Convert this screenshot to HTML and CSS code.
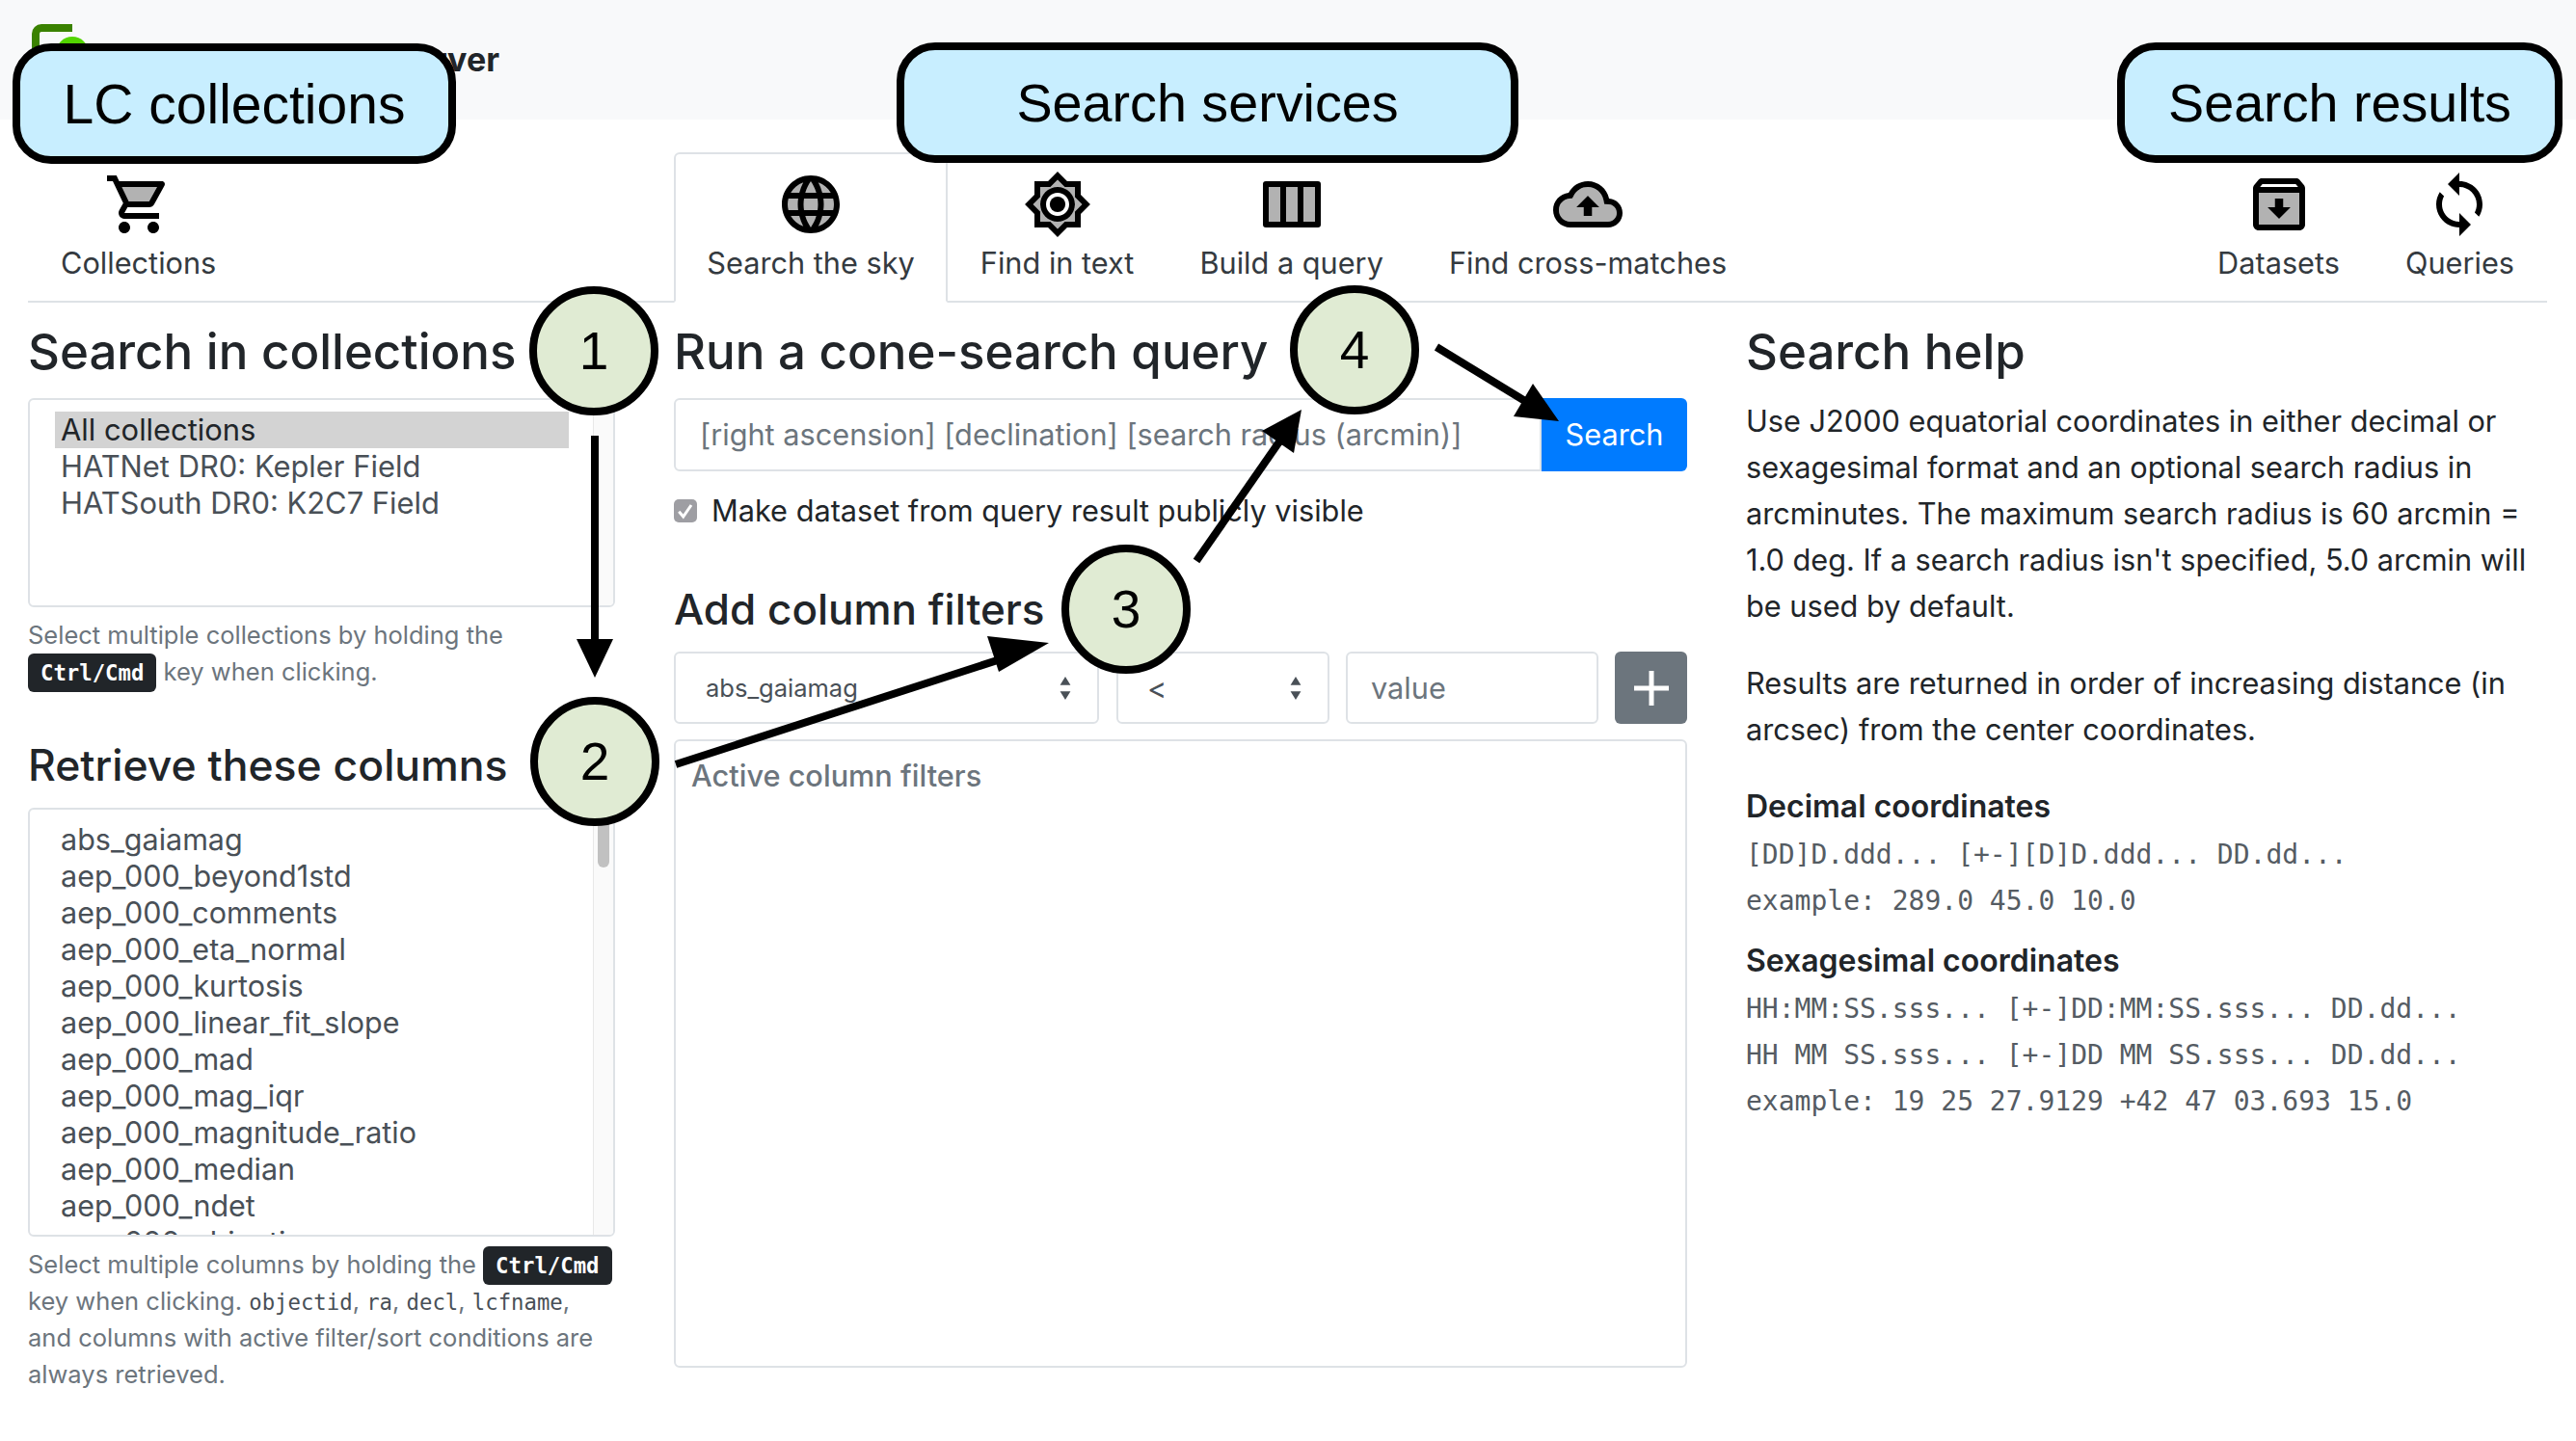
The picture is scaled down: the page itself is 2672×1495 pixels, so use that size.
FILE: index.html
```html
<!DOCTYPE html>
<html lang="en">
<head>
<meta charset="UTF-8" />
<meta name="viewport" content="width=device-width, initial-scale=1.0" />
<title>LCC-Server</title>
<link rel="stylesheet" href="styles.css">
</head>
<body>

<div class="page">

  <nav class="navbar">
    <svg class="logo" viewBox="0 0 60 60">
      <path d="M42 4H10a6 6 0 0 0-6 6v40" fill="none" stroke="#3a8200" stroke-width="8"/>
      <circle cx="42" cy="30" r="17" fill="#52d400"/>
    </svg>
    <span class="brand">HAT data server</span>
  </nav>

  <ul class="tabs">
    <li class="tab tab-first">
      <svg class="icon" viewBox="0 0 24 24"><path opacity=".3" d="M15.55 11l2.76-5H6.16l2.37 5z"/><path d="M15.55 13c.75 0 1.41-.41 1.75-1.03l3.58-6.49c.37-.66-.11-1.48-.87-1.48H5.21l-.94-2H1v2h2l3.6 7.59-1.35 2.44C4.52 15.37 5.48 17 7 17h12v-2H7l1.1-2h7.45zM6.16 6h12.15l-2.76 5H8.53L6.16 6zM7 18c-1.1 0-1.99.9-1.99 2S5.9 22 7 22s2-.9 2-2-.9-2-2-2zm10 0c-1.1 0-1.99.9-1.99 2s.89 2 1.99 2 2-.9 2-2-.9-2-2-2z"/></svg>
      <span>Collections</span>
    </li>
    <li class="tab active">
      <svg class="icon" viewBox="0 0 24 24"><circle opacity=".3" cx="12" cy="12" r="9.5"/><path d="M11.99 2C6.47 2 2 6.48 2 12s4.47 10 9.99 10C17.52 22 22 17.52 22 12S17.52 2 11.99 2zm6.93 6h-2.95c-.32-1.25-.78-2.45-1.38-3.56 1.84.63 3.37 1.91 4.33 3.56zM12 4.04c.83 1.2 1.48 2.53 1.91 3.96h-3.82c.43-1.43 1.08-2.76 1.91-3.96zM4.26 14C4.1 13.36 4 12.69 4 12s.1-1.36.26-2h3.38c-.08.66-.14 1.32-.14 2 0 .68.06 1.34.14 2H4.26zm.82 2h2.95c.32 1.25.78 2.45 1.38 3.56-1.84-.63-3.37-1.9-4.33-3.56zm2.95-8H5.08c.96-1.66 2.49-2.93 4.33-3.56C8.81 5.55 8.35 6.75 8.03 8zM12 19.96c-.83-1.2-1.48-2.53-1.91-3.96h3.82c-.43 1.43-1.08 2.76-1.91 3.96zM14.34 14H9.66c-.09-.66-.16-1.32-.16-2 0-.68.07-1.35.16-2h4.68c.09.65.16 1.32.16 2 0 .68-.07 1.34-.16 2zm.25 5.56c.6-1.11 1.06-2.31 1.38-3.56h2.95c-.96 1.65-2.49 2.93-4.33 3.56zM16.36 14c.08-.66.14-1.32.14-2 0-.68-.06-1.34-.14-2h3.38c.16.64.26 1.31.26 2s-.1 1.36-.26 2h-3.38z"/></svg>
      <span>Search the sky</span>
    </li>
    <li class="tab">
      <svg class="icon" viewBox="0 0 24 24"><path opacity=".3" d="M18 9.52V6h-3.52L12 3.52 9.52 6H6v3.52L3.52 12 6 14.48V18h3.52L12 20.48 14.48 18H18v-3.52L20.48 12 18 9.52zM12 18c-3.31 0-6-2.69-6-6s2.69-6 6-6 6 2.69 6 6-2.69 6-6 6z"/><path d="M20 8.69V4h-4.69L12 .69 8.69 4H4v4.69L.69 12 4 15.31V20h4.69L12 23.31 15.31 20H20v-4.69L23.31 12 20 8.69zm-2 5.79V18h-3.52L12 20.48 9.52 18H6v-3.52L3.52 12 6 9.52V6h3.52L12 3.52 14.48 6H18v3.52L20.48 12 18 14.48zM12 6c-3.31 0-6 2.69-6 6s2.69 6 6 6 6-2.69 6-6-2.69-6-6-6zm0 10c-2.21 0-4-1.79-4-4s1.79-4 4-4 4 1.79 4 4-1.79 4-4 4z"/><circle cx="12" cy="12" r="2.7"/></svg>
      <span>Find in text</span>
    </li>
    <li class="tab">
      <svg class="icon" viewBox="0 0 24 24"><path opacity=".3" d="M4 6h4v12H4zM10 6h4v12h-4zM16 6h4v12h-4z"/><path d="M3 4h18a1 1 0 0 1 1 1v14a1 1 0 0 1-1 1H3a1 1 0 0 1-1-1V5a1 1 0 0 1 1-1zm1 2v12h4V6H4zm6 0v12h4V6h-4zm6 0v12h4V6h-4z"/></svg>
      <span>Build a query</span>
    </li>
    <li class="tab">
      <svg class="icon" viewBox="0 0 24 24"><path opacity=".3" d="M19.21 12.04l-1.53-.11-.3-1.5C16.88 7.86 14.62 6 12 6 9.94 6 8.08 7.14 7.12 8.96l-.5.95-1.07.11C3.53 10.24 2 11.95 2 14c0 2.21 1.79 4 4 4h13c1.65 0 3-1.35 3-3 0-1.55-1.22-2.86-2.79-2.96zm-5.76.96v3h-2.91v-3H8l4-4 4 4h-2.55z"/><path d="M19.35 10.04C18.67 6.59 15.64 4 12 4 9.11 4 6.6 5.64 5.35 8.04 2.34 8.36 0 10.91 0 14c0 3.31 2.69 6 6 6h13c2.76 0 5-2.24 5-5 0-2.64-2.05-4.78-4.65-4.96zM19 18H6c-2.21 0-4-1.79-4-4 0-2.05 1.53-3.76 3.56-3.97l1.07-.11.5-.95C8.08 7.14 9.94 6 12 6c2.62 0 4.88 1.86 5.39 4.43l.3 1.5 1.53.11c1.56.1 2.78 1.41 2.78 2.96 0 1.65-1.35 3-3 3zM8 13h2.55v3h2.91v-3H16l-4-4z"/></svg>
      <span>Find cross-matches</span>
    </li>
    <li class="tab tab-results">
      <svg class="icon" viewBox="0 0 24 24"><path opacity=".3" d="M5 19h14V8H5v11zm5.55-6v-3h2.9v3H16l-4 4-4-4h2.55z"/><path d="M20.54 5.23l-1.39-1.68C18.88 3.21 18.47 3 18 3H6c-.47 0-.88.21-1.16.55L3.46 5.23C3.17 5.57 3 6.02 3 6.5V19c0 1.1.9 2 2 2h14c1.1 0 2-.9 2-2V6.5c0-.48-.17-.93-.46-1.27zM6.24 5h11.52l.83 1H5.42l.82-1zM5 19V8h14v11H5zm8.45-9h-2.9v3H8l4 4 4-4h-2.55z"/></svg>
      <span>Datasets</span>
    </li>
    <li class="tab">
      <svg class="icon" viewBox="0 0 24 24"><path d="M12 4V1L8 5l4 4V6c3.31 0 6 2.69 6 6 0 1.01-.25 1.97-.7 2.8l1.46 1.46C19.54 15.03 20 13.57 20 12c0-4.42-3.58-8-8-8zm0 14c-3.31 0-6-2.69-6-6 0-1.01.25-1.97.7-2.8L5.24 7.74C4.46 8.97 4 10.43 4 12c0 4.42 3.58 8 8 8v3l4-4-4-4v3z"/></svg>
      <span>Queries</span>
    </li>
  </ul>

  <main class="columns">

    <section>
      <h2>Search in collections</h2>
      <div class="listbox listbox-short">
        <ul class="options">
          <li class="selected">All collections</li>
          <li>HATNet DR0: Kepler Field</li>
          <li>HATSouth DR0: K2C7 Field</li>
        </ul>
        <div class="scroll-track"></div>
      </div>
      <p class="hint">Select multiple collections by holding the <kbd>Ctrl/Cmd</kbd> key when clicking.</p>

      <h2 class="h-columns">Retrieve these columns</h2>
      <div class="listbox listbox-tall">
        <ul class="options">
          <li>abs_gaiamag</li>
          <li>aep_000_beyond1std</li>
          <li>aep_000_comments</li>
          <li>aep_000_eta_normal</li>
          <li>aep_000_kurtosis</li>
          <li>aep_000_linear_fit_slope</li>
          <li>aep_000_mad</li>
          <li>aep_000_mag_iqr</li>
          <li>aep_000_magnitude_ratio</li>
          <li>aep_000_median</li>
          <li>aep_000_ndet</li>
          <li>aep_000_objective</li>
        </ul>
        <div class="scroll-track"><div class="scroll-thumb"></div></div>
      </div>
      <p class="hint">Select multiple columns by holding the <kbd>Ctrl/Cmd</kbd> key when clicking. <code>objectid</code>, <code>ra</code>, <code>decl</code>, <code>lcfname</code>,<br>and columns with active filter/sort conditions are always retrieved.</p>
    </section>

    <section>
      <h2>Run a cone-search query</h2>
      <div class="input-group">
        <div class="field field-grow placeholder">[right ascension] [declination] [search radius (arcmin)]</div>
        <div class="btn-search">Search</div>
      </div>
      <label class="check">
        <span class="checkbox"><svg viewBox="0 0 16 16"><path d="M3.5 8.5l3 3.5 5.5-8" fill="none" stroke="#fff" stroke-width="2"/></svg></span>
        Make dataset from query result publicly visible
      </label>

      <h2 class="h-filters">Add column filters</h2>
      <div class="filter-row">
        <div class="field select select-col">abs_gaiamag
          <svg class="updown" viewBox="0 0 12 24"><path d="M6 1l5 8H1zM6 23l5-8H1z"/></svg>
        </div>
        <div class="field select select-op">&lt;
          <svg class="updown" viewBox="0 0 12 24"><path d="M6 1l5 8H1zM6 23l5-8H1z"/></svg>
        </div>
        <div class="field field-value placeholder">value</div>
        <div class="btn-add"><svg viewBox="0 0 44 44"><path d="M22 4v36M4 22h36" stroke="#fff" stroke-width="5"/></svg></div>
      </div>
      <div class="active-filters">Active column filters</div>
    </section>

    <section>
      <h2>Search help</h2>
      <p class="help">Use J2000 equatorial coordinates in either decimal or sexagesimal format and an optional search radius in arcminutes. The maximum search radius is 60 arcmin = 1.0 deg. If a search radius isn't specified, 5.0 arcmin will be used by default.</p>
      <p class="help help-second">Results are returned in order of increasing distance (in arcsec) from the center coordinates.</p>
      <h5 class="h-decimal">Decimal coordinates</h5>
      <div class="mono">[DD]D.ddd... [+-][D]D.ddd... DD.dd...</div>
      <div class="mono">example: 289.0 45.0 10.0</div>
      <h5 class="h-sexa">Sexagesimal coordinates</h5>
      <div class="mono">HH:MM:SS.sss... [+-]DD:MM:SS.sss... DD.dd...</div>
      <div class="mono">HH MM SS.sss... [+-]DD MM SS.sss... DD.dd...</div>
      <div class="mono">example: 19 25 27.9129 +42 47 03.693 15.0</div>
    </section>

  </main>

  <!-- annotations drawn over the screenshot -->
  <svg class="arrows" viewBox="0 0 2672 1495">
    <path d="M617 452V665" stroke="#000" stroke-width="8"/>
    <path d="M598 663h38l-19 40z"/>
    <path d="M701 793L1050 680" stroke="#000" stroke-width="8"/>
    <path d="M1088 667L1036 697 1024 660z"/>
    <path d="M1241 582L1330 454" stroke="#000" stroke-width="8"/>
    <path d="M1350 425L1342 470 1309 447z"/>
    <path d="M1490 360L1590 421" stroke="#000" stroke-width="8"/>
    <path d="M1617 437L1570 432 1590 398z"/>
  </svg>

  <div class="callout callout-lc">LC collections</div>
  <div class="callout callout-services">Search services</div>
  <div class="callout callout-results">Search results</div>

  <div class="step step-1">1</div>
  <div class="step step-2">2</div>
  <div class="step step-3">3</div>
  <div class="step step-4">4</div>

</div>

</body>
</html>
```

FILE: styles.css
```css
* {
  box-sizing: border-box;
}

body {
  margin: 0;
  font-family: Inter, "Liberation Sans", sans-serif;
  font-size: 30.7px;
  line-height: 48px;
  color: #212529;
  background: #fff;
}

.page {
  position: relative;
  width: 2672px;
  height: 1495px;
  overflow: hidden;
}

/* Navbar */
.navbar {
  display: flex;
  align-items: center;
  height: 124px;
  padding-left: 33px;
  background: #f8f9fa;
}

.logo {
  width: 60px;
  height: 60px;
  margin-top: -14px;
}

.brand {
  width: 425px;
  font-size: 34px;
  font-weight: 700;
  text-align: right;
}

/* Tabs */
.tabs {
  display: flex;
  height: 190px;
  margin: 0 30px 0 29px;
  padding: 34px 0 0;
  list-style: none;
  border-bottom: 2px solid #dee2e6;
}

.tab {
  display: flex;
  flex-direction: column;
  align-items: center;
  height: 156px;
  padding: 16px 32px 0;
  border: 2px solid transparent;
  color: #343a40;
}

.tab.active {
  border-color: #dee2e6 #dee2e6 #fff;
  border-radius: 6px 6px 0 0;
  background: #fff;
}

.tab-first {
  margin-right: 441px;
}

.tab-results {
  margin-left: auto;
}

.icon {
  flex: none;
  width: 72px;
  height: 72px;
}

.tab span {
  margin-top: 1px;
  line-height: 48px;
}

/* Columns */
.columns {
  display: grid;
  grid-template-columns: 609px 1051px 831px;
  column-gap: 61px;
  padding: 20px 30px 0 29px;
}

h2 {
  margin: 0 0 17px;
  font-size: 51px;
  font-weight: 500;
  line-height: 62px;
}

.h-columns {
  margin: 47px 0 13px;
  font-size: 44.5px;
}

.h-filters {
  margin: 0 0 13px;
  font-size: 44px;
}

/* List boxes */
.listbox {
  display: flex;
  border: 2px solid #dee2e6;
  border-radius: 6px;
  overflow: hidden;
}

.listbox-short {
  height: 217px;
}

.listbox-tall {
  height: 445px;
}

.options {
  flex: 1;
  margin: 0;
  padding: 12px 25px 0 26px;
  list-style: none;
  color: #495057;
  font-size: 30.5px;
  line-height: 38px;
}

.listbox-short .options {
  font-size: 30.9px;
}

.options li {
  height: 38px;
  padding-left: 6px;
  white-space: nowrap;
}

.options .selected {
  background: #d3d3d3;
  color: #212529;
}

.scroll-track {
  flex: none;
  width: 21px;
  padding: 2px 4px;
  background: #fafafa;
  border-left: 1px solid #e8e8e8;
}

.scroll-thumb {
  height: 58px;
  background: #c1c1c1;
  border-radius: 6px;
}

.hint {
  margin: 10px 0 0;
  font-size: 25.5px;
  line-height: 38px;
  color: #6c757d;
}

kbd {
  padding: 7px 13px;
  font-family: "DejaVu Sans Mono", monospace;
  font-size: 22.3px;
  font-weight: 700;
  line-height: 1;
  color: #fff;
  background: #212529;
  border-radius: 6px;
}

code {
  font-family: "DejaVu Sans Mono", monospace;
  font-size: 22.3px;
  line-height: 1;
  color: #495057;
}

/* Query form */
.input-group {
  display: flex;
  height: 76px;
}

.field {
  display: flex;
  align-items: center;
  height: 100%;
  padding-left: 25px;
  border: 2px solid #dee2e6;
  border-radius: 6px;
  background: #fff;
}

.input-group .field {
  border-radius: 6px 0 0 6px;
}

.field-grow {
  flex: 1;
}

.placeholder {
  color: #6c757d;
}

.btn-search {
  display: flex;
  align-items: center;
  justify-content: center;
  width: 151px;
  color: #fff;
  background: #007bff;
  border-radius: 0 6px 6px 0;
}

.check {
  display: flex;
  align-items: center;
  gap: 15px;
  height: 48px;
  margin: 17px 0 47px;
}

.checkbox {
  display: block;
  width: 24px;
  height: 24px;
  background: #9e9ea3;
  border-radius: 5px;
}

.checkbox svg {
  display: block;
}

.filter-row {
  display: flex;
  height: 75px;
}

.select {
  position: relative;
  color: #495057;
}

.select-col {
  width: 441px;
  padding-left: 31px;
  font-size: 25.5px;
}

.select-op {
  width: 221px;
  margin-left: 18px;
  padding-left: 30px;
}

.updown {
  position: absolute;
  top: 23px;
  right: 26px;
  width: 14px;
  height: 26px;
  fill: #495057;
}

.field-value {
  width: 262px;
  margin-left: 17px;
  padding-left: 24px;
}

.btn-add {
  display: flex;
  align-items: center;
  justify-content: center;
  width: 75px;
  margin-left: 17px;
  background: #6c757d;
  border-radius: 6px;
}

.btn-add svg {
  width: 44px;
  height: 44px;
}

.active-filters {
  height: 652px;
  margin-top: 16px;
  padding: 12px 16px;
  border: 2px solid #dee2e6;
  border-radius: 6px;
  color: #6c757d;
  font-weight: 500;
}

/* Help column */
.help {
  margin: 0;
}

.help-second {
  margin-top: 32px;
}

h5 {
  margin: 0;
  font-size: 32px;
  font-weight: 600;
  line-height: 36px;
}

.h-decimal {
  margin: 38px 0 8px;
}

.h-sexa {
  margin: 20px 0 8px;
}

.mono {
  font-family: "DejaVu Sans Mono", monospace;
  font-size: 28px;
  color: #555c63;
  white-space: pre;
}

/* Annotations */
.arrows {
  position: absolute;
  top: 0;
  left: 0;
  width: 2672px;
  height: 1495px;
}

.callout {
  position: absolute;
  display: flex;
  align-items: center;
  justify-content: center;
  height: 125px;
  font-family: "Liberation Sans", Arial, sans-serif;
  font-size: 55.7px;
  color: #000;
  background: #c8eeff;
  border: 8px solid #000;
  border-radius: 40px;
}

.callout-lc {
  top: 45px;
  left: 13px;
  width: 460px;
  font-size: 57px;
}

.callout-services {
  top: 44px;
  left: 930px;
  width: 645px;
}

.callout-results {
  top: 44px;
  left: 2196px;
  width: 462px;
}

.step {
  position: absolute;
  display: flex;
  align-items: center;
  justify-content: center;
  width: 134px;
  height: 134px;
  font-family: "Liberation Sans", Arial, sans-serif;
  font-size: 55px;
  color: #000;
  background: #e0ebd3;
  border: 8px solid #000;
  border-radius: 50%;
}

.step-1 {
  top: 297px;
  left: 549px;
}

.step-2 {
  top: 723px;
  left: 550px;
}

.step-3 {
  top: 565px;
  left: 1101px;
}

.step-4 {
  top: 296px;
  left: 1338px;
}
```
